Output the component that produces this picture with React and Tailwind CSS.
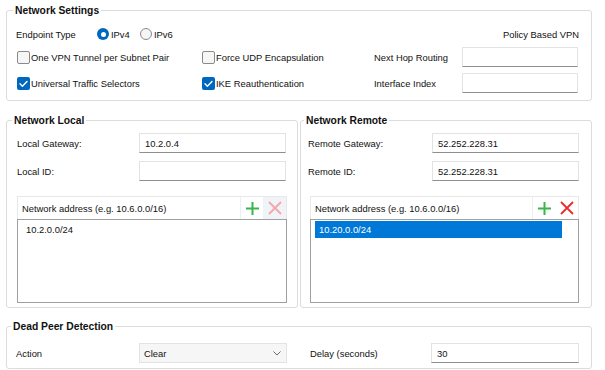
import React from 'react'

function GroupBox({ title, legendClass, className, children }) {
  return (
    <fieldset className={`border border-[#dcdcdc] rounded-[3px] ${className}`}>
      <legend className={`font-bold text-[10.3px] leading-[13px] px-[2px] ${legendClass}`}>{title}</legend>
      {children}
    </fieldset>
  )
}

function TextBox({ value, className = '' }) {
  return (
    <div className={`h-[20px] bg-white border border-[#e3e3e3] border-b-[#8f8f8f] pl-[5px] flex items-center ${className}`}>
      {value}
    </div>
  )
}

function CheckBox({ checked, label, className = '' }) {
  return (
    <div className={`flex items-center gap-[1px] ${className}`}>
      {checked ? (
        <span className="w-[13px] h-[13px] rounded-[2px] bg-[#0067c0] flex items-center justify-center">
          <svg width="13" height="13" viewBox="0 0 13 13" fill="none">
            <path d="M3 6.8l2.4 2.4L10 4.4" stroke="white" strokeWidth="1.4" strokeLinecap="round" strokeLinejoin="round" />
          </svg>
        </span>
      ) : (
        <span className="w-[13px] h-[13px] rounded-[2px] bg-[#f6f6f6] border border-[#8a8a8a]" />
      )}
      <span>{label}</span>
    </div>
  )
}

function Radio({ checked, label, className = '' }) {
  return (
    <div className={`flex items-center gap-[2px] ${className}`}>
      {checked ? (
        <span className="w-[12px] h-[12px] rounded-full bg-[#0067c0] flex items-center justify-center">
          <span className="w-[5px] h-[5px] rounded-full bg-white" />
        </span>
      ) : (
        <span className="w-[12px] h-[12px] rounded-full bg-[#f6f6f6] border border-[#8a8a8a]" />
      )}
      <span>{label}</span>
    </div>
  )
}

function AddressList({ item, selected, removeEnabled }) {
  return (
    <div>
      <div className="h-[23px] border border-[#e8e8e8] border-b-0 flex items-center">
        <span className="pl-[4px] flex-1">Network address (e.g. 10.6.0.0/16)</span>
        <div className="w-[23px] h-full border-l border-[#eeeeee] flex items-center justify-center">
          <svg width="15" height="15" viewBox="0 0 15 15" fill="none">
            <path d="M7.5 1v13M1 7.5h13" stroke="#39b54a" strokeWidth="2" />
          </svg>
        </div>
        <div className={`w-[23px] h-full flex items-center justify-center ${removeEnabled ? '' : 'bg-[#f0f3f8]'}`}>
          <svg width="16" height="16" viewBox="0 0 16 16" fill="none">
            <path d="M2 2l12 12M14 2L2 14" stroke={removeEnabled ? '#ee2a2a' : '#f5a6a6'} strokeWidth="1.8" />
          </svg>
        </div>
      </div>
      <div className="h-[84px] border border-[#a0a0a0] bg-white pt-[1px]">
        <div className={`ml-[4px] w-[247px] h-[17px] leading-[17px] pl-[4px] ${selected ? 'bg-[#0078d7] text-white' : ''}`}>
          {item}
        </div>
      </div>
    </div>
  )
}

export default function App() {
  return (
    <div className="w-[605px] h-[370px] bg-white pt-[4px] pl-[6px] text-[9.4px] leading-[13px] text-[#111] font-['Liberation_Sans',Arial,sans-serif] overflow-hidden">
      <GroupBox title="Network Settings" legendClass="ml-[6px]" className="w-[586px]">
        <div className="pt-[7px] pb-[7px] pl-[9px] pr-[12px]">
          <div className="h-[20px] flex items-center">
            <span className="w-[81px]">Endpoint Type</span>
            <Radio checked label="IPv4" className="w-[43px]" />
            <Radio label="IPv6" />
            <span className="ml-auto">Policy Based VPN</span>
          </div>
          <div className="mt-[3px] grid grid-cols-[186px_172px_88px_116px] grid-rows-[20px_20px] gap-y-[6px] items-center">
            <CheckBox label="One VPN Tunnel per Subnet Pair" className="ml-[1px]" />
            <CheckBox label="Force UDP Encapsulation" />
            <span>Next Hop Routing</span>
            <TextBox />
            <CheckBox checked label="Universal Traffic Selectors" className="ml-[1px]" />
            <CheckBox checked label="IKE Reauthentication" />
            <span>Interface Index</span>
            <TextBox />
          </div>
        </div>
      </GroupBox>

      <div className="mt-[13px] flex gap-[2px]">
        <GroupBox title="Network Local" legendClass="ml-[5px]" className="w-[292px]">
          <div className="pt-[6px] pb-[4px] px-[10px]">
            <div className="grid grid-cols-[122px_147px] grid-rows-[20px_20px] gap-y-[8px] items-center">
              <span>Local Gateway:</span>
              <TextBox value="10.2.0.4" />
              <span>Local ID:</span>
              <TextBox />
            </div>
            <div className="mt-[15px]">
              <AddressList item="10.2.0.0/24" />
            </div>
          </div>
        </GroupBox>

        <GroupBox title="Network Remote" legendClass="ml-[3px]" className="w-[292px]">
          <div className="pt-[6px] pb-[4px] pl-[7px] pr-[12px]">
            <div className="grid grid-cols-[124px_147px] grid-rows-[20px_20px] gap-y-[8px] items-center">
              <span>Remote Gateway:</span>
              <TextBox value="52.252.228.31" />
              <span>Remote ID:</span>
              <TextBox value="52.252.228.31" />
            </div>
            <div className="mt-[15px] ml-[2px]">
              <AddressList item="10.20.0.0/24" selected removeEnabled />
            </div>
          </div>
        </GroupBox>
      </div>

      <GroupBox title="Dead Peer Detection" legendClass="ml-[4px]" className="w-[586px] mt-[12px]">
        <div className="pt-[10px] pb-[5px] pl-[9px]">
          <div className="h-[20px] grid grid-cols-[123px_148px_23px_121px_148px] items-center">
            <span>Action</span>
            <div className="h-[20px] bg-[#f6f6f6] border border-[#e3e3e3] flex items-center pl-[4px] pr-[5px]">
              <span className="flex-1">Clear</span>
              <svg width="8" height="5" viewBox="0 0 8 5" fill="none">
                <path d="M0.5 0.5L4 4l3.5-3.5" stroke="#6a6a6a" strokeWidth="1" />
              </svg>
            </div>
            <span />
            <span>Delay (seconds)</span>
            <TextBox value="30" />
          </div>
        </div>
      </GroupBox>
    </div>
  )
}
